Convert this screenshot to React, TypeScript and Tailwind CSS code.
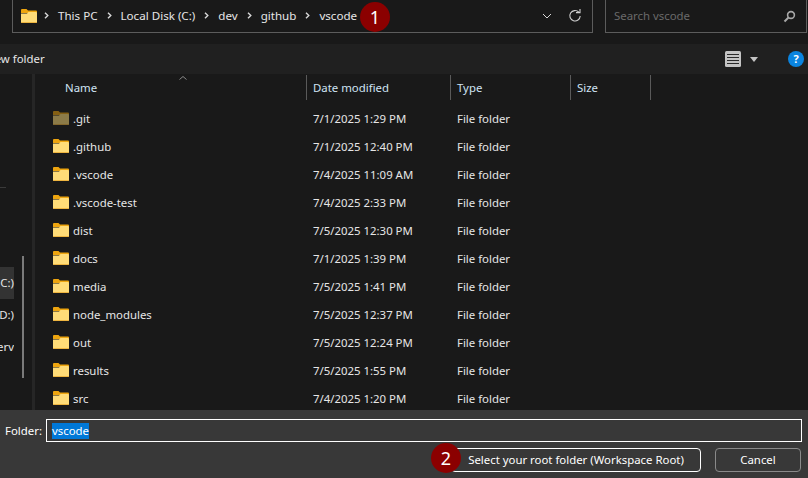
import React from 'react'

const rows = [
    { name: '.git', date: '7/1/2025 1:29 PM', hidden: true },
    { name: '.github', date: '7/1/2025 12:40 PM' },
    { name: '.vscode', date: '7/4/2025 11:09 AM' },
    { name: '.vscode-test', date: '7/4/2025 2:33 PM' },
    { name: 'dist', date: '7/5/2025 12:30 PM' },
    { name: 'docs', date: '7/1/2025 1:39 PM' },
    { name: 'media', date: '7/5/2025 1:41 PM' },
    { name: 'node_modules', date: '7/5/2025 12:37 PM' },
    { name: 'out', date: '7/5/2025 12:24 PM' },
    { name: 'results', date: '7/5/2025 1:55 PM' },
    { name: 'src', date: '7/4/2025 1:20 PM' },
]

const crumbs = ['This PC', 'Local Disk (C:)', 'dev', 'github', 'vscode']

const FolderIcon = ({ hidden = false }: { hidden?: boolean }) => (
    <svg width="16" height="14" viewBox="0 0 16 14" className={hidden ? 'opacity-50' : ''}>
        <path d="M0 1a1 1 0 0 1 1-1h4.5l1.5 1.5h8a1 1 0 0 1 1 1V4H0z" fill="#eea50f" />
        <path d="M0 4.5h6L7.5 3H15a1 1 0 0 1 1 1v9a1 1 0 0 1-1 1H1a1 1 0 0 1-1-1z" fill="#ffdc78" />
        <path d="M0 13h16a1 1 0 0 1-1 1H1a1 1 0 0 1-1-1z" fill="#eeb540" />
    </svg>
)

const Chevron = () => (
    <svg width="5" height="7" viewBox="0 0 5 7" className="shrink-0">
        <path d="M1 .8 3.8 3.5 1 6.2" fill="none" stroke="#d8d8d8" strokeWidth="1.4" />
    </svg>
)

const Badge = ({ n, className }: { n: number; className: string }) => (
    <div className={`absolute w-[30px] h-[30px] rounded-full bg-[#8b0000] text-white flex items-center justify-center text-[18px] ${className}`}>
        {n}
    </div>
)

export default function App() {
    return (
        <div className="relative w-[808px] h-[478px] overflow-hidden bg-[#191919] text-[#e6e6e6] text-[11.4px] font-['Noto_Sans','Open_Sans',sans-serif] flex flex-col">
            {/* address bar */}
            <div className="h-[44px] shrink-0 flex items-start pl-[12px]">
                <div className="w-[581px] h-[33px] border border-t-0 border-[#5c5c5c] flex items-center pl-[8px] pr-[10px]">
                    <FolderIcon />
                    <div className="flex items-center ml-[7px] gap-[9px] text-[11.6px]">
                        {crumbs.map(c => (
                            <React.Fragment key={c}>
                                <Chevron />
                                <span>{c}</span>
                            </React.Fragment>
                        ))}
                    </div>
                    <svg width="10" height="6" viewBox="0 0 10 6" className="ml-auto mr-[16px]">
                        <path d="M1 1l4 4 4-4" fill="none" stroke="#d8d8d8" />
                    </svg>
                    <svg width="14" height="14" viewBox="0 0 14 14">
                        <path d="M10.8 3.2a5.2 5.2 0 1 0 1.4 3.8" fill="none" stroke="#d0d0d0" strokeWidth="1.1" />
                        <path d="M8 3.6h4V0" fill="none" stroke="#d0d0d0" strokeWidth="1.1" />
                    </svg>
                </div>
                <div className="ml-[12px] w-[202px] h-[33px] border border-t-0 border-[#5c5c5c] flex items-center pl-[8px] pr-[10px] text-[#6a6a6a]">
                    <span>Search vscode</span>
                    <svg width="13" height="13" viewBox="0 0 13 13" className="ml-auto">
                        <circle cx="8" cy="5" r="3.4" fill="none" stroke="#a8a8a8" strokeWidth="1.6" />
                        <path d="M5.5 7.5 1.5 11.5" stroke="#a8a8a8" strokeWidth="2" />
                    </svg>
                </div>
            </div>

            {/* toolbar */}
            <div className="h-[30px] shrink-0 bg-[#202020] flex items-center">
                <span className="ml-[-14px]">New folder</span>
                <div className="ml-auto flex items-center">
                    <svg width="16" height="16" viewBox="0 0 16 16">
                        <rect width="16" height="16" rx="1.5" fill="#c4c4c4" />
                        <path d="M2 3.5h12M2 6.5h12M2 9.5h12M2 12.5h12" stroke="#2a2a2a" />
                    </svg>
                    <svg width="8" height="5" viewBox="0 0 8 5" className="ml-[9px]">
                        <path d="M0 0h8L4 5z" fill="#c4c4c4" />
                    </svg>
                    <div className="ml-[30px] mr-[4px] w-[16px] h-[16px] rounded-full bg-[#0a84e0] flex items-center justify-center text-white text-[11px] font-bold">?</div>
                </div>
            </div>

            {/* main */}
            <div className="flex-1 flex min-h-0 overflow-hidden">
                <div className="relative w-[32px] shrink-0 overflow-hidden">
                    <div className="absolute left-0 top-[113px] w-[6px] h-px bg-[#3a3a3a]" />
                    <div className="absolute left-0 top-[193px] w-[14px] h-[32px] bg-[#333333]" />
                    <div className="absolute left-[22px] top-[182px] w-[2px] h-[122px] bg-[#7a7a7a]" />
                    <div className="absolute left-[-30px] top-[193px] w-[44px] h-[32px] flex items-center justify-end">C:)</div>
                    <div className="absolute left-[-30px] top-[225px] w-[44px] h-[32px] flex items-center justify-end">D:)</div>
                    <div className="absolute left-[-30px] top-[257px] w-[44px] h-[32px] flex items-center justify-end overflow-hidden">erv</div>
                </div>
                <div className="w-[3px] shrink-0 bg-[#262626]" />
                <div className="flex-1 min-w-0 relative">
                    <div className="grid grid-cols-[272px_144px_120px_80px] h-[26px] pt-px items-center text-[#d0e4f4]">
                        <div className="h-full flex items-center pl-[30px] border-r border-[#5a5a5a]">Name</div>
                        <div className="h-full flex items-center pl-[6px] border-r border-[#5a5a5a]">Date modified</div>
                        <div className="h-full flex items-center pl-[6px] border-r border-[#5a5a5a]">Type</div>
                        <div className="h-full flex items-center pl-[6px] border-r border-[#5a5a5a]">Size</div>
                    </div>
                    <svg width="8" height="4" viewBox="0 0 8 4" className="absolute left-[144px] top-[2px]">
                        <path d="M.5 3.5 4 .5l3.5 3" fill="none" stroke="#8a8a8a" />
                    </svg>
                    <div className="flex flex-col mt-[4px]">
                        {rows.map(r => (
                            <div key={r.name} className="grid grid-cols-[272px_144px_120px] h-[28px] shrink-0 items-center">
                                <div className="flex items-center pl-[18px] gap-[4px]">
                                    <FolderIcon hidden={r.hidden} />
                                    <span className="pt-[2px]">{r.name}</span>
                                </div>
                                <div className="pl-[6px] pt-[2px]">{r.date}</div>
                                <div className="pl-[6px] pt-[2px]">File folder</div>
                            </div>
                        ))}
                    </div>
                </div>
            </div>

            {/* footer */}
            <div className="h-[68px] shrink-0 bg-[#383838] relative">
                <div className="flex items-center h-[23px] mt-[9px]">
                    <span className="ml-[5px] w-[41px] text-white">Folder:</span>
                    <div className="w-[756px] h-[23px] border border-white flex items-center pl-[5px]">
                        <span className="bg-[#0078d7] text-white h-[16px] flex items-center leading-none">vscode</span>
                    </div>
                </div>
                <div className="flex justify-end mt-[6px] mr-[7px] gap-[14px]">
                    <div className="w-[250px] h-[24px] border border-white rounded-[4px] flex items-center justify-center text-white">Select your root folder (Workspace Root)</div>
                    <div className="w-[86px] h-[24px] border border-[#8a8a8a] rounded-[4px] flex items-center justify-center text-white">Cancel</div>
                </div>
            </div>

            <Badge n={1} className="left-[360px] top-[2px]" />
            <Badge n={2} className="left-[431px] top-[443px]" />
        </div>
    )
}
